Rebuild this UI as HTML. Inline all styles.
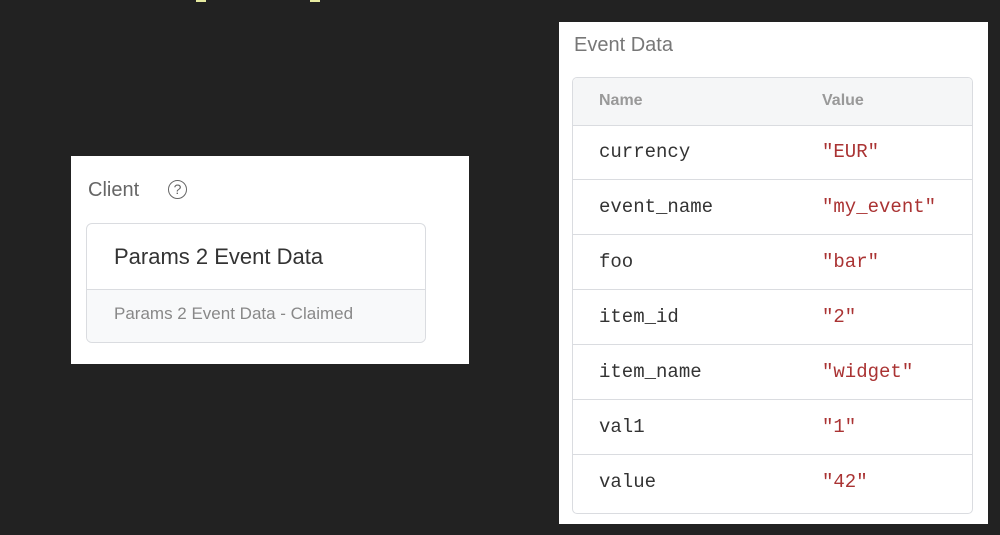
<!DOCTYPE html>
<html><head><style>
body{margin:0;width:1000px;height:535px;background:#222;position:relative;overflow:hidden;font-family:"Liberation Sans",sans-serif}
.a{position:absolute}
.u{position:absolute;top:0;height:2px;background:#e6eaa0}
</style></head><body>
<div class="u" style="left:196px;width:10px"></div>
<div class="u" style="left:310px;width:10px"></div>
<div class="a" style="left:71px;top:156px;width:398px;height:208px;background:#fff"></div>
<div class="a" style="left:88px;top:179px;font-size:20px;color:#666">Client</div>
<div class="a" style="left:168px;top:180px;width:17px;height:17px;border:1.5px solid #666;border-radius:50%;font-size:14px;line-height:17px;text-align:center;color:#666">?</div>
<div class="a" style="left:86px;top:223px;width:338px;height:118px;border:1px solid #dadce0;border-radius:6px;overflow:hidden;background:#fff">
 <div style="height:65px;border-bottom:1px solid #dadce0;padding-left:27px;font-size:22px;line-height:66px;color:#333">Params 2 Event Data</div>
 <div style="height:52px;background:#f8f9fa;padding-left:27px;font-size:17px;line-height:48px;color:#888">Params 2 Event Data - Claimed</div>
</div>
<div class="a" style="left:559px;top:22px;width:429px;height:502px;background:#fff"></div>
<div class="a" style="left:574px;top:34px;font-size:20px;color:#777">Event Data</div>
<div class="a" style="left:572px;top:77px;width:399px;height:435px;border:1px solid #dadce0;border-radius:5px;overflow:hidden">
<div style="height:47px;background:#f5f6f7;border-bottom:1px solid #dadce0;position:relative;font-size:16px;color:#999;font-weight:bold">
<span class="a" style="left:26px;top:14px">Name</span><span class="a" style="left:249px;top:14px">Value</span></div>
</div>
<div class="a" style="left:573px;top:125px;width:399px">
<style>.r{height:54px;border-bottom:1px solid #dadce0;position:relative;font-family:'Liberation Mono',monospace;font-size:19px}.r:last-child{border:none}.n{position:absolute;left:26px;top:16px;color:#333}.v{position:absolute;left:249px;top:16px;color:#a33}</style>
<div class="r"><span class="n">currency</span><span class="v">"EUR"</span></div>
<div class="r"><span class="n">event_name</span><span class="v">"my_event"</span></div>
<div class="r"><span class="n">foo</span><span class="v">"bar"</span></div>
<div class="r"><span class="n">item_id</span><span class="v">"2"</span></div>
<div class="r"><span class="n">item_name</span><span class="v">"widget"</span></div>
<div class="r"><span class="n">val1</span><span class="v">"1"</span></div>
<div class="r"><span class="n">value</span><span class="v">"42"</span></div>
</div>
</body></html>
